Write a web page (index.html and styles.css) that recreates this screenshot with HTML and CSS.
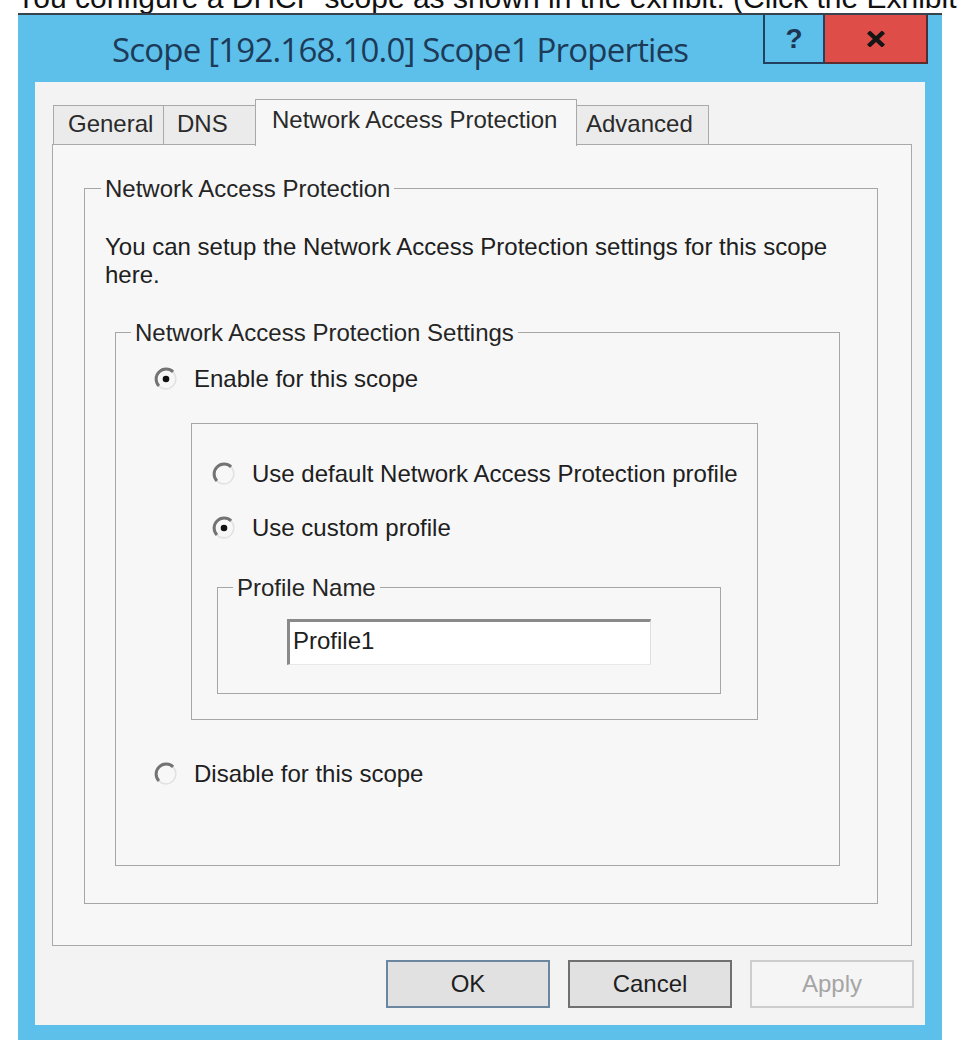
FILE: index.html
```html
<!DOCTYPE html>
<html lang="en">
<head>
<meta charset="utf-8">
<title>Scope Properties</title>
<link rel="stylesheet" href="styles.css">
</head>
<body>
<div class="question"><span class="question-text">You configure a DHCP scope as shown in the exhibit. (Click the Exhibit button.)</span></div>
<div class="dialog">
  <div class="titlebar">
    <div class="title">Scope [192.168.10.0] Scope1 Properties</div>
    <div class="caption-buttons">
      <div class="cap-help">?</div>
      <div class="cap-close">
        <svg width="20" height="16" viewBox="0 0 20 16"><path d="M2.5 1 L17.5 15 M17.5 1 L2.5 15" stroke="#151515" stroke-width="4.4" fill="none"/></svg>
      </div>
    </div>
  </div>
  <div class="client">
    <div class="tabs">
      <div class="tab tab-general">General</div>
      <div class="tab tab-dns">DNS</div>
      <div class="tab tab-nap">Network Access Protection</div>
      <div class="tab tab-advanced">Advanced</div>
    </div>
    <div class="panel">
      <fieldset class="group group-nap">
        <legend>Network Access Protection</legend>
        <div class="nap-body">
          <p class="intro">You can setup the Network Access Protection settings for this scope here.</p>
          <fieldset class="group group-settings">
            <legend>Network Access Protection Settings</legend>
            <div class="settings-body">
              <div class="radio-row row-outer">
                <svg class="radio" width="24" height="24" viewBox="0 0 24 24"><path d="M4.93 19.07 A10 10 0 0 0 19.07 4.93" fill="none" stroke="#e2e2e2" stroke-width="1.6"/><path d="M19.07 4.93 A10 10 0 0 0 4.93 19.07" fill="none" stroke="#737373" stroke-width="3"/><circle cx="12" cy="12" r="3.3" fill="#111"/></svg>
                <span>Enable for this scope</span>
              </div>
              <div class="inner-box">
                <div class="radio-row">
                  <svg class="radio" width="24" height="24" viewBox="0 0 24 24"><path d="M4.93 19.07 A10 10 0 0 0 19.07 4.93" fill="none" stroke="#e2e2e2" stroke-width="1.6"/><path d="M19.07 4.93 A10 10 0 0 0 4.93 19.07" fill="none" stroke="#737373" stroke-width="3"/></svg>
                  <span>Use default Network Access Protection profile</span>
                </div>
                <div class="radio-row row-custom">
                  <svg class="radio" width="24" height="24" viewBox="0 0 24 24"><path d="M4.93 19.07 A10 10 0 0 0 19.07 4.93" fill="none" stroke="#e2e2e2" stroke-width="1.6"/><path d="M19.07 4.93 A10 10 0 0 0 4.93 19.07" fill="none" stroke="#737373" stroke-width="3"/><circle cx="12" cy="12" r="3.3" fill="#111"/></svg>
                  <span>Use custom profile</span>
                </div>
                <fieldset class="group group-profile">
                  <legend>Profile Name</legend>
                  <div class="profile-body">
                    <div class="textbox">Profile1</div>
                  </div>
                </fieldset>
              </div>
              <div class="radio-row row-outer row-disable">
                <svg class="radio" width="24" height="24" viewBox="0 0 24 24"><path d="M4.93 19.07 A10 10 0 0 0 19.07 4.93" fill="none" stroke="#e2e2e2" stroke-width="1.6"/><path d="M19.07 4.93 A10 10 0 0 0 4.93 19.07" fill="none" stroke="#737373" stroke-width="3"/></svg>
                <span>Disable for this scope</span>
              </div>
            </div>
          </fieldset>
        </div>
      </fieldset>
    </div>
    <div class="buttons">
      <div class="btn btn-ok">OK</div>
      <div class="btn btn-cancel">Cancel</div>
      <div class="btn btn-apply">Apply</div>
    </div>
  </div>
</div>
</body>
</html>
```
FILE: styles.css
```css
html, body {
  margin: 0;
  padding: 0;
  background: #ffffff;
}

body {
  font-family: "Liberation Sans", Arial, sans-serif;
  color: #202020;
}

.question {
  height: 13px;
  overflow: hidden;
  white-space: nowrap;
  font-size: 30px;
  line-height: 30px;
  color: #111111;
  padding-left: 16px;
}

.question-text {
  display: block;
  margin-top: -17px;
}

.dialog {
  margin-left: 18px;
  width: 924px;
  background: #5cc0ea;
  padding-bottom: 15px;
}

.titlebar {
  display: flex;
  height: 69px;
  box-sizing: border-box;
  border-top: 2px solid #36434f;
}

.title {
  font-family: "Open Sans", "Noto Sans", sans-serif;
  font-size: 33px;
  line-height: 45px;
  letter-spacing: -0.8px;
  color: #1d3a58;
  padding: 12px 0 0 94px;
  white-space: nowrap;
}

.caption-buttons {
  margin-left: auto;
  margin-right: 14px;
  display: flex;
  align-items: flex-start;
}

.cap-help {
  width: 58px;
  height: 47px;
  border: 2px solid #23405e;
  border-top: 0;
  display: flex;
  align-items: center;
  justify-content: center;
  font-weight: bold;
  font-size: 28px;
  color: #1d3550;
}

.cap-close {
  width: 101px;
  height: 47px;
  background: #de4d48;
  border-right: 2px solid #4a2f35;
  border-bottom: 2px solid #5e2b2e;
  display: flex;
  align-items: center;
  justify-content: center;
}

.client {
  margin: 0 17px 0 17px;
  background: #f3f3f3;
  padding: 17px 13px 17px 17px;
}

.tabs {
  display: flex;
  align-items: flex-end;
  height: 47px;
  margin-left: 1px;
  margin-bottom: -2px;
  position: relative;
  z-index: 1;
}

.tab {
  box-sizing: border-box;
  height: 39px;
  margin-bottom: 2px;
  border: 1px solid #a9a9a9;
  border-bottom: 0;
  background: #ebebeb;
  font-size: 24px;
  line-height: 28px;
  padding-top: 4px;
  white-space: nowrap;
  color: #2a2a2a;
}

.tab + .tab {
  margin-left: -1px;
}

.tab-general {
  width: 111px;
  padding-left: 14px;
}

.tab-dns {
  width: 93px;
  padding-left: 13px;
}

.tab-nap {
  width: 322px;
  height: 47px;
  margin-bottom: 0;
  padding-top: 6px;
  padding-left: 16px;
  background: #f7f7f7;
}

.tab-advanced {
  width: 133px;
  padding-left: 9px;
}

.panel {
  border: 1px solid #a9a9a9;
  background: #f7f7f7;
  padding: 30px 33px 41px 31px;
}

.group {
  margin: 0;
  padding: 0;
  min-width: 0;
  border: 1px solid #a6a6a6;
}

.group legend {
  font-size: 24px;
  line-height: 27px;
  padding: 0 4px;
  margin-left: 16px;
  color: #252525;
}

.nap-body {
  padding: 31px 37px 37px 20px;
}

.intro {
  margin: 0;
  font-size: 24px;
  line-height: 28px;
}

.group-settings {
  margin: 30px 0 0 10px;
}

.group-settings legend {
  margin-left: 15px;
}

.settings-body {
  padding: 19px 0 77px 0;
}

.radio-row {
  display: flex;
  align-items: center;
  gap: 16px;
  height: 28px;
  font-size: 24px;
  line-height: 28px;
  white-space: nowrap;
}

.radio {
  flex: none;
}

.row-outer {
  padding-left: 38px;
}

.row-disable {
  margin-top: 40px;
}

.inner-box {
  margin: 30px 81px 0 75px;
  border: 1px solid #a6a6a6;
  padding: 36px 0 25px 20px;
}

.row-custom {
  margin-top: 26px;
}

.group-profile {
  margin: 32px 36px 0 5px;
}

.profile-body {
  padding: 18px 0 28px 69px;
}

.textbox {
  box-sizing: border-box;
  width: 364px;
  height: 46px;
  background: #ffffff;
  border-top: 3px solid #8a8a8a;
  border-left: 3px solid #8a8a8a;
  border-right: 1px solid #dedede;
  border-bottom: 1px solid #e8e8e8;
  padding: 5px 0 0 3px;
  font-size: 24px;
  line-height: 28px;
}

.buttons {
  display: flex;
  justify-content: flex-end;
  gap: 18px;
  margin: 14px -2px 0 0;
}

.btn {
  box-sizing: border-box;
  width: 164px;
  height: 48px;
  border: 2px solid #707070;
  background: #e1e1e1;
  font-size: 24px;
  display: flex;
  align-items: center;
  justify-content: center;
  color: #1e1e1e;
}

.btn-ok {
  border-color: #6d86a0;
}

.btn-apply {
  background: #f5f5f5;
  border-color: #cdcdcd;
  color: #a5a5a5;
}
```
